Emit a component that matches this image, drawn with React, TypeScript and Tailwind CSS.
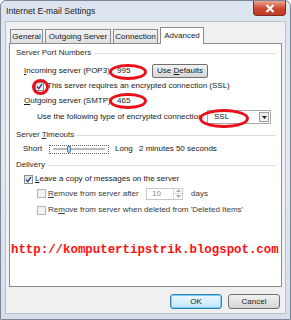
import React from 'react'

const tabs = [
  { label: 'General', w: 'w-[33px]' },
  { label: 'Outgoing Server', w: 'w-[66px]' },
  { label: 'Connection', w: 'w-[45px]' },
  { label: 'Advanced', w: 'w-[44px]' },
]

function Ring({ className }: { className: string }) {
  // red hand-drawn ellipse over the value
  return (
    <span
      className={`pointer-events-none absolute rounded-[50%] border-[3px] border-[#e8101a] ${className}`}
    />
  )
}

function Check({ checked, disabled }: { checked?: boolean; disabled?: boolean }) {
  return (
    <span
      className={`flex h-[9px] w-[9px] shrink-0 items-center justify-center border ${
        disabled ? 'border-[#b5b5b5] bg-[#f4f4f4]' : 'border-[#8f8f8f] bg-gradient-to-br from-[#dcdcdc] to-white'
      }`}
    >
      {checked && (
        <svg width="7" height="7" viewBox="0 0 7 7">
          <path d="M1 3.5 L2.8 5.6 L6 1" fill="none" stroke="#2c4b8f" strokeWidth="1.4" />
        </svg>
      )}
    </span>
  )
}

function GroupLabel({ children }: { children: React.ReactNode }) {
  return (
    <div className="flex h-[14px] items-center pr-[5px] pl-[6px]">
      <span className="text-[#2a2a2a]">{children}</span>
      <span className="ml-[3px] h-px flex-1 bg-[#d5dfe5]" />
    </div>
  )
}

export default function App() {
  return (
    <div className="flex h-[320px] w-[291px] flex-col overflow-hidden rounded-t-[6px] border border-[#7b8696] bg-gradient-to-b from-[#dbe4ef] via-[#e4e9f1] to-[#d5dde9] font-['Liberation_Sans',sans-serif] text-[8px] leading-none whitespace-nowrap text-[#1a1a1a]">
      {/* Title bar */}
      <div className="flex h-[20px] shrink-0 items-start justify-between pl-[5px]">
        <span className="mt-[6px] text-[8.6px] text-[#222]">Internet E-mail Settings</span>
        <button className="mr-[4px] flex h-[15px] w-[33px] items-center justify-center rounded-b-[4px] border border-t-0 border-[#7a2b23] bg-gradient-to-b from-[#e8a593] via-[#cf4a34] to-[#c03a24]">
          <svg width="10" height="9" viewBox="0 0 10 9">
            <path d="M1.5 1 L8.5 8 M8.5 1 L1.5 8" stroke="white" strokeWidth="2.2" />
          </svg>
        </button>
      </div>

      {/* Client area */}
      <div className="mx-[4px] mb-[5px] flex flex-1 flex-col border border-[#b9c3d0] bg-[#f0f0f0] px-[3px] pt-[4px]">
        {/* Tabs */}
        <div className="flex h-[17px] items-end pl-[1px]">
          {tabs.map((t) => {
            const active = t.label === 'Advanced'
            return (
              <div
                key={t.label}
                className={`mr-[2px] flex items-center justify-center border border-b-0 border-[#898c95] ${t.w} ${
                  active ? 'relative z-10 -mb-px h-[17px] bg-white' : 'h-[14px] bg-gradient-to-b from-[#f2f2f2] to-[#dfdfdf]'
                }`}
              >
                {t.label}
              </div>
            )
          })}
        </div>

        {/* Panel */}
        <div className="flex h-[244px] flex-col border border-[#898c95] bg-white">
          <div className="mt-[2px]">
            <GroupLabel>Server Port Numbers</GroupLabel>
          </div>

          <div className="relative mt-[3px] flex h-[16px] items-center pl-[14px]">
            <span className="w-[86px]">
              <span className="underline">I</span>ncoming server (POP3):
            </span>
            <span className="w-[42px] pl-[7px]">995</span>
            <button className="h-[14px] w-[56px] rounded-[2px] border border-[#707070] bg-gradient-to-b from-[#f2f2f2] to-[#d7d7d7] leading-none">
              Use <span className="underline">D</span>efaults
            </button>
            <Ring className="top-[1px] left-[99px] h-[16px] w-[38px]" />
          </div>

          <div className="relative flex h-[14px] items-center pl-[25px]">
            <Check checked />
            <span className="ml-[3px]">This server requires an encrypted connection (SSL)</span>
            <Ring className="top-0 left-[22px] h-[16px] w-[17px]" />
          </div>

          <div className="relative flex h-[16px] items-center pl-[14px]">
            <span className="w-[86px]">
              <span className="underline">O</span>utgoing server (SMTP):
            </span>
            <span className="pl-[7px]">465</span>
            <Ring className="top-0 left-[99px] h-[16px] w-[38px]" />
          </div>

          <div className="relative flex h-[16px] items-center pl-[27px]">
            <span className="w-[170px]">Use the following type of encrypted connection:</span>
            <span className="relative flex h-[14px] w-[64px] items-center border border-[#a9a9a9] bg-white pl-[6px]">
              SSL
              <span className="absolute top-[1px] right-[1px] flex h-[10px] w-[10px] items-center justify-center border border-[#a0a0a0] bg-[#ececec]">
                <svg width="5" height="3" viewBox="0 0 5 3">
                  <path d="M0 0 H5 L2.5 3 Z" fill="#222" />
                </svg>
              </span>
            </span>
            <Ring className="top-0 left-[189px] h-[19px] w-[50px]" />
          </div>

          <div className="mt-[3px]">
            <GroupLabel>
              Server <span className="underline">T</span>imeouts
            </GroupLabel>
          </div>

          <div className="flex h-[14px] items-center pl-[13px]">
            <span className="w-[26px]">Short</span>
            <span className="relative flex h-[9px] w-[60px] items-center border border-dotted border-[#666]">
              <span className="mx-[3px] h-[2px] flex-1 border-t border-b border-[#bbb] bg-[#e9e9e9]" />
              <span className="absolute top-0 left-[17px] h-[7px] w-[4px] rounded-b-full border border-[#3c7fb1] bg-[#b8d6f0]" />
            </span>
            <span className="ml-[6px] w-[24px]">Long</span>
            <span>2 minutes 50 seconds</span>
          </div>

          <div className="mt-[2px]">
            <GroupLabel>Delivery</GroupLabel>
          </div>

          <div className="flex h-[14px] items-center pl-[14px]">
            <Check checked />
            <span className="ml-[2px]">
              <span className="underline">L</span>eave a copy of messages on the server
            </span>
          </div>

          <div className="flex h-[15px] items-center pl-[27px]">
            <Check disabled />
            <span className="ml-[2px] w-[98px] text-[#3a3a3a]">
              <span className="underline">R</span>emove from server after
            </span>
            <span className="flex h-[12px] w-[37px] items-center border border-[#c8c8c8] bg-white">
              <span className="flex-1 pl-[5px] text-[#8a8a8a]">10</span>
              <span className="flex h-full w-[9px] flex-col border-l border-[#d8d8d8]">
                <span className="flex flex-1 items-center justify-center border-b border-[#d8d8d8]">
                  <svg width="5" height="3" viewBox="0 0 5 3"><path d="M0 3 H5 L2.5 0 Z" fill="#aaa" /></svg>
                </span>
                <span className="flex flex-1 items-center justify-center">
                  <svg width="5" height="3" viewBox="0 0 5 3"><path d="M0 0 H5 L2.5 3 Z" fill="#aaa" /></svg>
                </span>
              </span>
            </span>
            <span className="ml-[8px] text-[#3a3a3a]">days</span>
          </div>

          <div className="mt-[2px] flex h-[14px] items-center pl-[27px]">
            <Check disabled />
            <span className="ml-[2px] text-[#3a3a3a]">
              Re<span className="underline">m</span>ove from server when deleted from 'Deleted Items'
            </span>
          </div>

          <div className="mt-[26px] flex h-[14px] items-center pl-[1px] font-['Liberation_Mono',monospace] text-[12.4px] font-bold text-[#ff1010]">
            http://komputertipstrik.blogspot.com
          </div>
        </div>

        {/* Buttons */}
        <div className="mt-[7px] flex justify-end gap-[6px] pr-[2px]">
          <button className="h-[15px] w-[52px] rounded-[3px] border border-[#3c7fb1] bg-gradient-to-b from-[#eaf6fd] via-[#d9f0fc] to-[#bee6fd] leading-none shadow-[inset_0_0_0_1px_#6fd0ff]">
            OK
          </button>
          <button className="h-[15px] w-[52px] rounded-[3px] border border-[#707070] bg-gradient-to-b from-[#f2f2f2] to-[#d5d5d5] leading-none">
            Cancel
          </button>
        </div>
      </div>
    </div>
  )
}
